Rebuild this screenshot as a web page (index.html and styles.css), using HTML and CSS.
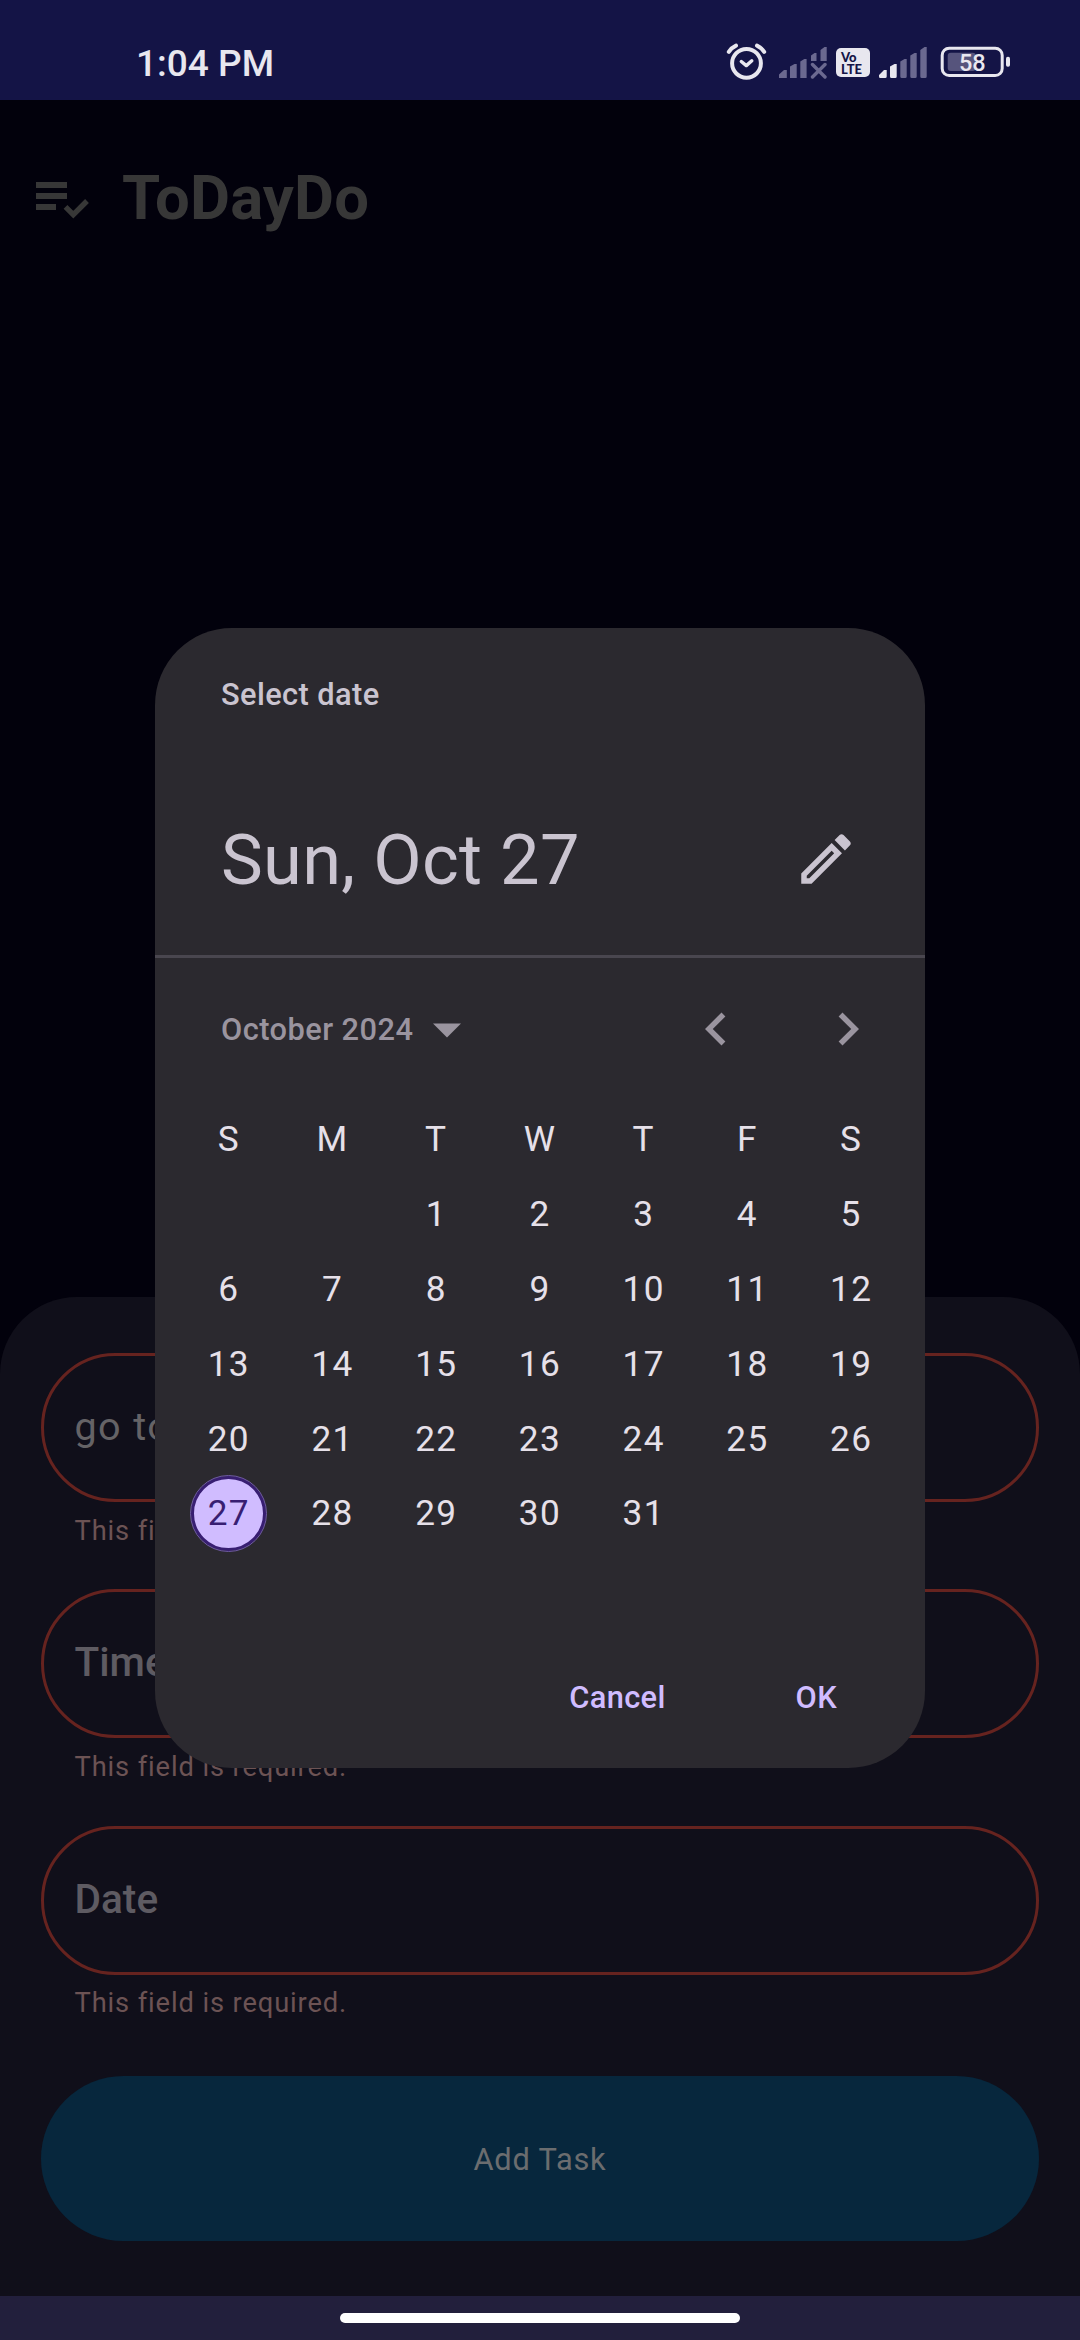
FILE: index.html
```html
<!DOCTYPE html>
<html lang="en">
<head>
<meta charset="utf-8">
<title>ToDayDo</title>
<link rel="stylesheet" href="styles.css">
</head>
<body>
<div class="screen">
  <header class="status">
    <span class="clock">1:04 PM</span>
    <div class="indicators">
      <svg width="42" height="40" viewBox="726 42 42 40" fill="none" stroke="#e8e7ef" stroke-linecap="round" stroke-linejoin="round">
        <circle cx="746.5" cy="63.3" r="14.4" stroke-width="4"/>
        <path d="M728.8 51.8Q731.6 47.6 736 45.6M764.2 51.8Q761.4 47.6 757 45.6" stroke-width="4"/>
        <path d="M741.3 61.5L746.3 65.6L751.8 60.8" stroke-width="3.4"/>
      </svg>
      <svg class="sim-one" width="48" height="32" viewBox="779 47 48 32" fill="#6b6990">
        <path d="M779 78v-3.5l5-4.5h2.8v8zM790 78V66.500l4.500-2.500h2.200v14zM800.300 78V61.500l4-2.500h2.300v19zM811 61v-5.500l3.500-2.500h2v8zM820.500 61V50l4-3h2.200v14z"/>
        <path d="M812.500 64.500L825 77M825 64.500L812.500 77" stroke="#6b6990" stroke-width="3.4" stroke-linecap="round"/>
      </svg>
      <div class="volte"><span>Vo</span><span>LTE</span></div>
      <svg class="sim-two" width="48" height="32" viewBox="879 47 48 32" fill="#6b6990">
        <path fill="#e8e7ef" d="M880.300 78q-1.300 0-1.300-1.500v-1.500l5-5h2.700v6.500q0 1.500-1.500 1.500zM890 76.500V66.500l4.500-2.500h2.200v12.500q0 1.500-1.500 1.500h-3.700q-1.500 0-1.500-1.500z"/>
        <path d="M900.300 76.500V61.500l4.200-2.500h2.200v17.500q0 1.500-1.500 1.500h-3.400q-1.500 0-1.500-1.500zM910.300 76.500V55.500l4.200-2.500h2.200v23.500q0 1.500-1.500 1.500h-3.400q-1.500 0-1.500-1.500zM920.300 76.500V50l4.200-3h2.200v29.500q0 1.500-1.500 1.500h-3.400q-1.500 0-1.500-1.500z"/>
      </svg>
      <svg class="battery" width="70" height="32" viewBox="940 46 70 32">
        <rect x="942.200" y="48.200" width="60" height="27.300" rx="7" fill="none" stroke="#e8e7ef" stroke-width="3"/>
        <rect x="947.700" y="52.700" width="28" height="18.300" rx="3" fill="#56547c"/>
        <rect x="1006" y="56.700" width="4" height="10" rx="1.800" fill="#e8e7ef"/>
        <text class="charge" x="972.300" y="71" text-anchor="middle">58</text>
      </svg>
    </div>
  </header>

  <div class="appbar">
    <svg width="54" height="38" viewBox="36 181 54 38" fill="#373737">
      <path d="M36 182h31v6H36zM36 193h31v6H36zM36 204h20v6H36z"/>
      <path d="M65.500 206.800L73.300 214.600L87 201" fill="none" stroke="#373737" stroke-width="5.400"/>
    </svg>
    <h1>ToDayDo</h1>
  </div>

  <main class="sheet">
    <div class="field typed">go to</div>
    <p class="error">This field is required.</p>
    <div class="field">Time</div>
    <p class="error">This field is required.</p>
    <div class="field">Date</div>
    <p class="error">This field is required.</p>
    <div class="add">Add Task</div>
  </main>

  <footer class="navbar"><div class="handle"></div></footer>

  <section class="dialog">
    <div class="head">
      <p class="help">Select date</p>
      <div class="headline">
        <h2>Sun, Oct 27</h2>
        <svg width="66" height="66" viewBox="0 0 24 24" fill="#cac4d0"><path d="M14.06 9.02l.92.92L5.92 19H5v-.92l9.06-9.06M17.66 3c-.25 0-.51.1-.7.29l-1.83 1.83 3.75 3.75 1.83-1.83c.39-.39.39-1.02 0-1.41l-2.34-2.34c-.2-.2-.45-.29-.71-.29zm-3.6 3.19L3 17.25V21h3.75L17.81 9.94l-3.75-3.75z"/></svg>
      </div>
    </div>
    <div class="monthbar">
      <span class="month">October 2024</span>
      <svg class="caret" width="28" height="15" viewBox="0 0 28 15" fill="#9a949f"><path d="M0 .5h28L14 14.500z"/></svg>
      <svg class="prev" width="66" height="66" viewBox="0 0 24 24" fill="#9a949f"><path d="M15.41 7.41L14 6l-6 6 6 6 1.410-1.410L10.830 12z"/></svg>
      <svg class="next" width="66" height="66" viewBox="0 0 24 24" fill="#9a949f"><path d="M10 6L8.590 7.410 13.170 12l-4.580 4.590L10 18l6-6z"/></svg>
    </div>
    <div class="days">
      <span>S</span><span>M</span><span>T</span><span>W</span><span>T</span><span>F</span><span>S</span>
      <span></span><span></span><span>1</span><span>2</span><span>3</span><span>4</span><span>5</span>
      <span>6</span><span>7</span><span>8</span><span>9</span><span>10</span><span>11</span><span>12</span>
      <span>13</span><span>14</span><span>15</span><span>16</span><span>17</span><span>18</span><span>19</span>
      <span>20</span><span>21</span><span>22</span><span>23</span><span>24</span><span>25</span><span>26</span>
      <span class="picked">27</span><span>28</span><span>29</span><span>30</span><span>31</span>
    </div>
    <div class="actions"><span>Cancel</span><span>OK</span></div>
  </section>
</div>
</body>
</html>
```
FILE: styles.css
```css
* {
  box-sizing: border-box;
  margin: 0;
  padding: 0;
}

body {
  font-family: Roboto, sans-serif;
  background: #02010c;
}

svg {
  display: block;
  flex: none;
}

.screen {
  position: relative;
  width: 1080px;
  height: 2340px;
  display: flex;
  flex-direction: column;
  overflow: hidden;
  background: #02010c;
}

/* Status bar */
.status {
  height: 100px;
  flex: none;
  display: flex;
  justify-content: space-between;
  padding: 42px 70px 0 136px;
  background: #141446;
  color: #e8e7ef;
}

.clock {
  font-size: 37px;
  font-weight: 500;
  line-height: 43px;
}

.indicators {
  display: flex;
  align-items: flex-start;
}

.sim-one {
  margin: 5px 9px 0 11px;
}

.volte {
  width: 34px;
  height: 29px;
  margin-top: 6px;
  padding: 2.500px 0 0 5px;
  border-radius: 5px;
  background: #e8e7ef;
  color: #141446;
  display: flex;
  flex-direction: column;
  font: 900 13px/12px Lato, sans-serif;
}

.sim-two {
  margin: 5px 13px 0 9px;
}

.battery {
  margin-top: 4px;
}

.charge {
  font-size: 23.500px;
  font-weight: 500;
  fill: #e8e7ef;
}

/* App bar */
.appbar {
  height: 196px;
  flex: none;
  display: flex;
  align-items: center;
  gap: 32px;
  padding-left: 36px;
  color: #373737;
}

.appbar svg {
  margin-top: 4px;
}

.appbar h1 {
  font-size: 61.600px;
  font-weight: 700;
  line-height: 72px;
  letter-spacing: 0.150px;
}

/* Task form */
.sheet {
  height: 999px;
  margin-top: auto;
  flex: none;
  padding: 56px 41px 0;
  border-radius: 77px 77px 0 0;
  background: #100f1a;
}

.field {
  height: 149px;
  padding-left: 30.500px;
  border: 3px solid #66231f;
  border-radius: 75px;
  font-size: 40.600px;
  font-weight: 500;
  line-height: 141px;
  color: #5e5b62;
}

.field.typed {
  font-size: 39.600px;
  font-weight: 400;
  letter-spacing: 1.400px;
  color: #656366;
}

.error {
  height: 87.400px;
  padding: 10.500px 0 0 33.500px;
  font-size: 27.300px;
  line-height: 36px;
  letter-spacing: 0.880px;
  color: #6c5354;
}

.add {
  height: 165px;
  margin-top: 14px;
  border-radius: 83px;
  background: #07273d;
  text-align: center;
  font-size: 30.800px;
  line-height: 168px;
  letter-spacing: 0.780px;
  color: #6b6d6f;
}

.navbar {
  height: 44px;
  flex: none;
  padding-top: 17px;
  background: #221f3c;
}

.handle {
  width: 400px;
  height: 10px;
  margin: 0 auto;
  border-radius: 5px;
  background: #fff;
}

/* Date picker */
.dialog {
  position: absolute;
  left: 155px;
  top: 628px;
  width: 770px;
  height: 1140px;
  border-radius: 77px;
  background: #2b292f;
  color: #e6e0e9;
}

.head {
  height: 330px;
  padding: 49px 66px 0;
  border-bottom: 3px solid #49464f;
  color: #cac4d0;
}

.help {
  font-size: 30.800px;
  font-weight: 500;
  line-height: 36px;
  letter-spacing: 0.400px;
}

.headline {
  height: 84px;
  margin-top: 104px;
  display: flex;
  align-items: center;
  justify-content: space-between;
}

.headline h2 {
  font-size: 70.400px;
  font-weight: 400;
  line-height: 84px;
  padding-top: 2px;
  letter-spacing: 0.280px;
}

.monthbar {
  height: 144px;
  display: flex;
  align-items: center;
  padding: 0 44px 0 66px;
  color: #9a949f;
}

.month {
  margin-top: -2px;
  font-size: 30.800px;
  font-weight: 500;
  letter-spacing: 0.450px;
}

.caret {
  margin-left: 19.500px;
}

.prev {
  margin: -2px 66px 0 auto;
}

.next {
  margin-top: -2px;
}

.days {
  display: grid;
  grid-template-columns: repeat(7, 1fr);
  grid-template-rows: repeat(5, 75px) 73px;
  padding: 0 22px;
  text-align: center;
  font-size: 35.200px;
  line-height: 75px;
  letter-spacing: 1.375px;
}

.days span:nth-child(n+36) {
  line-height: 73px;
}

.days span.picked:nth-child(n+36) {
  width: 75px;
  height: 75px;
  align-self: center;
  justify-self: center;
  border: 3px solid #381e72;
  border-radius: 50%;
  outline: 0.500px solid #6f5aa5;
  background: #d0bcff;
  color: #381e72;
  line-height: 69px;
}

.actions {
  display: flex;
  justify-content: flex-end;
  gap: 130px;
  padding: 130px 88px 0 0;
  font-size: 30.800px;
  font-weight: 500;
  line-height: 36px;
  letter-spacing: 0.350px;
  color: #d0bcff;
}
```
